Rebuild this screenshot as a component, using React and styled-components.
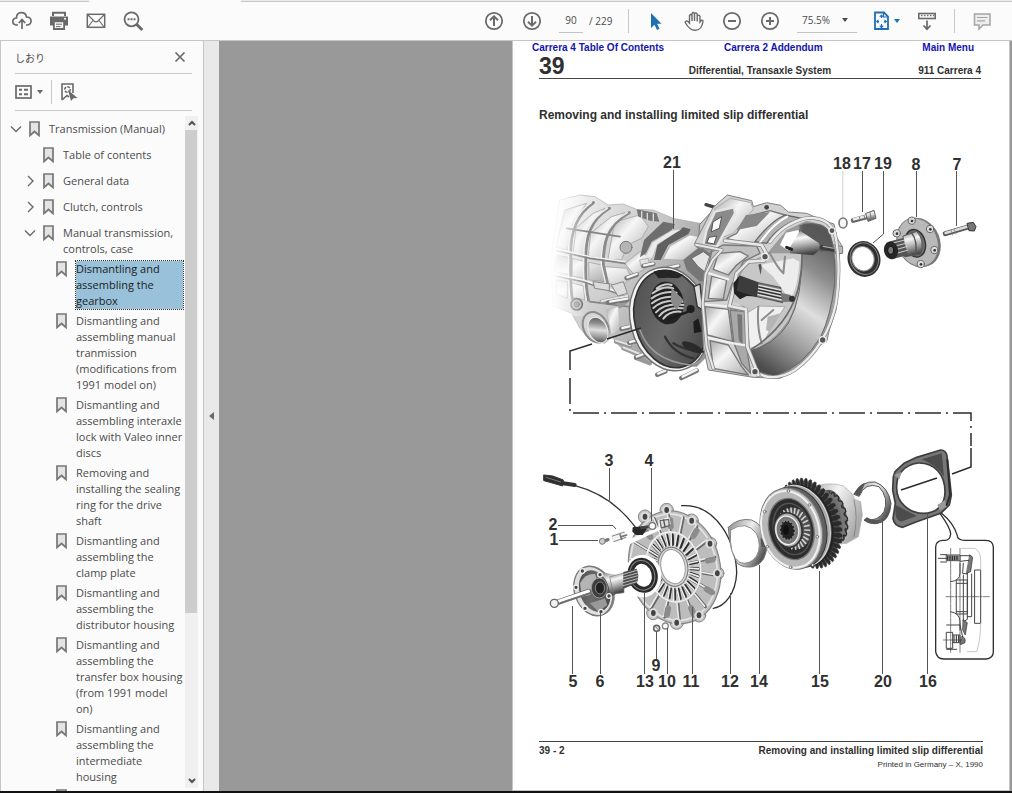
import React from "react";
import styled, { createGlobalStyle, css } from "styled-components";

const GlobalStyle = createGlobalStyle`
  * { box-sizing: border-box; }
  body {
    margin: 0;
    background: #fbfbfb;
    font-family: "Open Sans", "Noto Sans CJK JP", sans-serif;
    font-size: 11px;
    color: #4b4b4b;
  }
  button, input, select { font: inherit; color: inherit; }
`;

/* ---------- shell ---------- */

const Window = styled.div`
  display: flex;
  flex-direction: column;
  height: 100vh;
  border-bottom: 2px solid #111;
  overflow: hidden;
`;

const TabStrip = styled.div`
  display: flex;
  flex: none;
  height: 2px;
`;

const TabGap = styled.div`
  width: ${(p) => p.$width || "auto"};
  flex: ${(p) => (p.$width ? "none" : "1")};
  background: #ececec;
  border-bottom: 1px solid #c6c6c6;
`;

const ActiveTab = styled.div`
  width: 152px;
`;

const Toolbar = styled.header`
  display: flex;
  flex: none;
  align-items: center;
  justify-content: space-between;
  height: 39px;
  padding: 0 19px 1px 11px;
  border-bottom: 1px solid #c6c6c6;
  background: #fbfbfb;
`;

const ToolGroup = styled.div`
  display: flex;
  align-items: center;
  gap: ${(p) => p.$gap}px;
`;

const IconButton = styled.button`
  display: flex;
  flex: none;
  align-items: center;
  justify-content: space-between;
  width: ${(p) => p.$width || 22}px;
  height: 24px;
  padding: 0;
  border: 0;
  background: none;
  color: ${(p) => p.$color || "#6a6a6a"};
`;

const Divider = styled.span`
  width: 1px;
  height: 24px;
  background: #c8c8c8;
`;

const PageField = styled.label`
  display: flex;
  align-items: center;
  gap: 6px;
  width: 53px;
  font-size: 10px;
  white-space: pre;
`;

const PageInput = styled.input`
  width: 24px;
  height: 24px;
  padding: 0;
  border: 0;
  border-bottom: 1px solid #c4c4c4;
  background: none;
  text-align: center;
`;

const ZoomField = styled.label`
  display: flex;
  align-items: center;
  width: 60px;
  height: 24px;
  padding: 0 9px 0 5px;
  border-bottom: 1px solid #c4c4c4;
`;

const ZoomSelect = styled.select`
  flex: 1;
  min-width: 0;
  padding: 0;
  border: 0;
  appearance: none;
  background: none;
  font-size: 10px;
`;

const Body = styled.div`
  display: flex;
  flex: 1;
  min-height: 0;
`;

/* ---------- bookmarks ---------- */

const Sidebar = styled.aside`
  display: flex;
  flex: none;
  flex-direction: column;
  width: 204px;
  border-left: 1px solid #c6c6c6;
  border-right: 1px solid #c6c6c6;
  background: #fbfbfb;
`;

const PanelRow = styled.div`
  display: flex;
  flex: none;
  align-items: center;
  justify-content: ${(p) => (p.$spread ? "space-between" : "flex-start")};
  gap: 8px;
  height: ${(p) => p.$height}px;
  margin: 0 11px 0 14px;
  border-bottom: 1px solid #c8c8c8;
`;

const PanelTitle = styled.h2`
  margin: 0;
  font-size: 10px;
  font-weight: 400;
`;

const ListFrame = styled.div`
  display: flex;
  flex: 1;
  min-height: 0;
  margin: 5px 5px 0 0;
`;

const Tree = styled.ul`
  flex: 1;
  min-width: 0;
  margin: 0;
  padding: 5px 2px 0 0;
  overflow: hidden;
  list-style: none;
`;

const indents = [9, 23, 36];

const TreeRow = styled.li`
  display: flex;
  align-items: flex-start;
  min-height: 26px;
  padding: 0 0 4px ${(p) => indents[p.$level]}px;
`;

const Toggle = styled.button`
  display: flex;
  align-items: center;
  width: 19px;
  height: 16px;
  padding: 0;
  border: 0;
  background: none;
  color: #6a6a6a;
`;

const Blank = styled.span`
  flex: none;
  width: 19px;
`;

const BookmarkLink = styled.a`
  flex: 1;
  margin-left: 9px;
  line-height: 16px;
  white-space: pre-line;
  color: #4b4b4b;
  text-decoration: none;
  ${(p) =>
    p.$selected &&
    css`
      background: #99c1da;
      color: #1c1c1c;
      outline: 1px dotted #333;
      outline-offset: 0;
    `}
`;

const ScrollBar = styled.div`
  display: flex;
  flex: none;
  flex-direction: column;
  width: 13px;
  margin-bottom: 3px;
  background: #f0f0f0;
`;

const ScrollButton = styled.button`
  display: flex;
  align-items: center;
  justify-content: center;
  width: 13px;
  height: 14px;
  padding: 0;
  border: 0;
  background: none;
  color: #505050;
`;

const ScrollTrack = styled.div`
  flex: 1;
`;

const ScrollThumb = styled.div`
  width: 12px;
  height: 75%;
  background: #cdcdcd;
`;

const Rail = styled.button`
  display: flex;
  flex: none;
  align-items: center;
  justify-content: center;
  width: 15px;
  padding: 0;
  border: 0;
  background: #e9e9e9;
  color: #6a6a6a;
`;

/* ---------- document ---------- */

const Viewer = styled.main`
  display: flex;
  flex: 1;
  justify-content: flex-end;
  min-width: 0;
  padding-right: 2px;
  overflow: hidden;
  background: #999;
`;

const Sheet = styled.article`
  display: flex;
  flex: none;
  flex-direction: column;
  width: 498px;
  border: solid #c6c6c6;
  border-width: 0 1px 1px;
  background: #fff;
  color: #303030;
  font-family: "Liberation Sans", Arial, sans-serif;
  font-weight: 700;
`;

const SheetLinks = styled.nav`
  display: grid;
  grid-template-columns: auto auto 1fr;
  gap: 60px;
  padding: 0 35px 0 19px;
  font-size: 10px;
  line-height: 14px;
`;

const SheetLink = styled.a`
  color: #1414b0;
  text-decoration: none;
  text-align: right;
`;

const SheetHeader = styled.div`
  display: grid;
  grid-template-columns: 1fr auto 1fr;
  align-items: end;
  height: 24px;
  margin: 0 28px 0 26px;
  border-bottom: 1px solid #444;
  font-size: 10px;
  line-height: 15px;
`;

const Chapter = styled.span`
  font-size: 23px;
  line-height: 23px;
`;

const RightText = styled.span`
  text-align: right;
`;

const SheetTitle = styled.h1`
  margin: 28px 26px 0;
  font-size: 12px;
  line-height: 16px;
`;

const Figure = styled.figure`
  flex: none;
  height: 550px;
  margin: 27px 0 0;
`;

const SheetFooter = styled.footer`
  display: flex;
  justify-content: space-between;
  margin: 41px 26px 0;
  padding-top: 2px;
  border-top: 1px solid #444;
  font-size: 10px;
  line-height: 14px;
`;

const Imprint = styled.small`
  display: block;
  font-size: 8px;
  font-weight: 400;
  text-align: right;
`;

/* ---------- icons ---------- */

const Svg = ({ w = 22, h = 22, children, sw = 2 }) => (
  <svg
    width={w}
    height={h}
    viewBox={`0 0 ${w} ${h}`}
    fill="none"
    stroke="currentColor"
    strokeWidth={sw}
    aria-hidden="true"
  >
    {children}
  </svg>
);

const CloudIcon = () => (
  <Svg sw={1.7}>
    <path d="M7 15H6C0.5 15 0.5 8 5.5 8C5.5 1 14.500 1 15.500 7C21.500 7 21.500 15 16 15H15" />
    <path d="M11 19V10M7.800 13L11 9.600L14.200 13" />
  </Svg>
);
const PrintIcon = () => (
  <Svg>
    <path d="M5 6V2.800H17V6" />
    <rect x="2" y="6.500" width="18" height="9" fill="currentColor" stroke="none" />
    <path d="M5.900 11.400H16.100V19H5.900Z" fill="#fbfbfb" strokeWidth="1.800" />
    <path d="M8 14.200H14M8 16.600H12.500" strokeWidth="1" />
    <rect x="16" y="8" width="2" height="1.500" fill="#fbfbfb" stroke="none" />
  </Svg>
);
const MailIcon = () => (
  <Svg sw={1.5}>
    <rect x="2.300" y="4.300" width="17.400" height="13" />
    <path d="M3 5L9 11Q11 12.800 13 11L19 5M3 17L8 10.500M19 17L14 10.500" strokeWidth="1.100" />
  </Svg>
);
const SearchIcon = () => (
  <Svg>
    <circle cx="9.500" cy="9.300" r="7" strokeWidth="1.800" />
    <path d="M14.500 14.300L20.300 20" strokeWidth="3" />
    <path d="M5.500 9.300H13.500" strokeDasharray="2 1" />
  </Svg>
);
const CircleIcon = ({ d }) => (
  <Svg sw={2}>
    <circle cx="11" cy="11" r="8.200" strokeWidth="1.800" />
    <path d={d} />
  </Svg>
);
const CursorIcon = () => (
  <Svg>
    <path
      d="M6 3V18L9.500 14.800L12 20L14.500 18.800L12.100 13.800H16.500Z"
      fill="currentColor"
      stroke="none"
    />
  </Svg>
);
const HandIcon = () => (
  <Svg sw={1.4}>
    <path d="M6.500 13V5.500Q7.700 3.400 9 5.500V11V3.500Q10.200 1.600 11.500 3.500V11V3.700Q13 2 14.200 4V11.500V5.800Q16 4.200 17 6.200V12C18.500 10 19.500 9.500 20 11C19.500 16 17.500 20.300 12 20.300C7 20.300 4.500 16.500 2.200 12.500C2.500 10.300 4.700 10.700 6.500 13Z" />
  </Svg>
);
const Caret = () => (
  <svg width="6" height="4" viewBox="0 0 6 4" aria-hidden="true">
    <path d="M0 0H6L3 4Z" fill="currentColor" />
  </svg>
);
const FitIcon = () => (
  <Svg w={17} sw={1.8}>
    <path d="M2 2.500H11L15 6.500V19H2Z" />
    <path d="M10.500 3V7H15" strokeWidth="1.200" />
    <path d="M8.500 5V8M8.500 14V17.500M3.500 11.500H6M11 11.500H14" strokeWidth="1.200" />
    <path d="M6.800 7L8.500 5L10.200 7M6.800 15.700L8.500 17.700L10.200 15.700M5.500 9.800L3.700 11.500L5.500 13.200M11.500 9.800L13.300 11.500L11.500 13.200" strokeWidth="1.100" />
  </Svg>
);
const RulerIcon = () => (
  <Svg>
    <rect x="2.800" y="3.500" width="16.400" height="5" strokeWidth="1.600" />
    <path d="M5 5.500H18" strokeWidth="1.500" strokeDasharray="1.500 1.500" />
    <path d="M11 10.500V19M7.500 15.500L11 19.200L14.500 15.500" strokeWidth="1.700" />
  </Svg>
);
const CommentIcon = () => (
  <Svg>
    <path d="M3.500 4H19V15H12L8 19V15H3.500Z" fill="#eee" strokeWidth="1.500" />
    <path d="M6 7.500H16.500M6 10.800H14" strokeWidth="1.200" />
  </Svg>
);
const CloseIcon = () => (
  <Svg w={12} h={12}>
    <path d="M1.500 1.500L10.500 10.500M10.500 1.500L1.500 10.500" strokeWidth="1.700" />
  </Svg>
);
const PanelOptionsIcon = () => (
  <Svg w={17} h={14}>
    <rect x="1" y="1" width="15" height="12" strokeWidth="1.700" />
    <path d="M4 4.800H7M4 9.200H7M9 4.800H13M9 9.200H13" strokeWidth="2" />
  </Svg>
);
const FindBookmarkIcon = () => (
  <Svg w={18} h={20} sw={1.6}>
    <path d="M2 18V2H13V11M2 18L7 13.500L9 15" />
    <circle cx="7.500" cy="7.500" r="2.800" strokeDasharray="3 1.200" />
    <path d="M8 8L17.500 16L13.500 16.300L11 19Z" fill="currentColor" stroke="none" />
  </Svg>
);
const BookmarkSvg = styled.svg`
  flex: none;
`;
const BookmarkIcon = () => (
  <BookmarkSvg width="11" height="16" viewBox="0 0 11 16" aria-hidden="true">
    <path d="M1 1H10V14.500L5.500 10.500L1 14.500Z" fill="#e4e4e4" stroke="#777" strokeWidth="1.700" />
  </BookmarkSvg>
);
const Chevron = ({ open }) => (
  <Svg w={12} h={12} sw={1.4}>
    <path d={open ? "M1 3.500L6 8.500L11 3.500" : "M4 1L9 6L4 11"} />
  </Svg>
);

/* ---------- exploded view ---------- */

const polar = (cx, cy, rx, ry, a, tilt = 0) => {
  const t = (tilt * Math.PI) / 180;
  const x = rx * Math.cos(a);
  const y = ry * Math.sin(a);
  return [
    (cx + x * Math.cos(t) - y * Math.sin(t)).toFixed(1),
    (cy + x * Math.sin(t) + y * Math.cos(t)).toFixed(1),
  ];
};

const teeth = (cx, cy, rx, ry, n, depth, tilt) => {
  const pts = [];
  for (let i = 0; i < n; i++) {
    [[0, 0], [0.3, depth], [0.65, depth], [0.8, 0]].forEach(([f, d]) => {
      pts.push(polar(cx, cy, rx + d, ry + d, ((i + f) / n) * Math.PI * 2, tilt).join(","));
    });
  }
  return `M${pts.join("L")}Z`;
};

const Spokes = ({ cx, cy, inner, outer, n, tilt = 0, ...rest }) => {
  let d = "";
  for (let i = 0; i < n; i++) {
    const a = (i / n) * Math.PI * 2;
    d += `M${polar(cx, cy, inner[0], inner[1], a, tilt)}L${polar(cx, cy, outer[0], outer[1], a, tilt)}`;
  }
  return <path d={d} fill="none" {...rest} />;
};

const Ring = ({ cx, cy, rx, ry, tilt = 0, ...rest }) => (
  <ellipse cx={cx} cy={cy} rx={rx} ry={ry} transform={`rotate(${tilt} ${cx} ${cy})`} {...rest} />
);

const callouts = [
  ["21", 672, 168], ["18", 842, 169], ["17", 862, 169], ["19", 883, 169],
  ["8", 916, 170], ["7", 957, 170], ["3", 609, 466], ["4", 649, 466],
  ["2", 553, 530], ["1", 554, 545], ["9", 656, 671], ["5", 573, 687],
  ["6", 600, 687], ["13", 645, 687], ["10", 667, 687], ["11", 691, 687],
  ["12", 730, 687], ["14", 759, 687], ["15", 820, 687], ["20", 883, 687],
  ["16", 928, 687],
];

const leaders =
  "M673.500 170V229M862.500 171V212M883.500 171V234L873 243M916.500 171V217M956.500 171V226" +
  "M609.500 468V502M651.500 468V521M558 525.500H613L616 529M559 540.500H598" +
  "M572.500 606V674M600.500 612V674M644.500 593V674M656.500 632V659M667.500 628V674" +
  "M692.500 607V674M730.500 593V674M759.500 565V674M819.500 571V674M882.500 518V674M927.500 514V674";

function Defs() {
  return (
    <defs>
      <linearGradient id="body" x1="0" y1="0" x2="1" y2="0.6">
        <stop offset="0" stopColor="#fff" />
        <stop offset="0.25" stopColor="#e3e3e3" />
        <stop offset="0.6" stopColor="#c4c4c4" />
        <stop offset="1" stopColor="#8e8e8e" />
      </linearGradient>
      <linearGradient id="cell" x1="0" y1="0" x2="1" y2="1">
        <stop offset="0" stopColor="#a8a8a8" />
        <stop offset="0.4" stopColor="#f6f6f6" />
        <stop offset="1" stopColor="#adadad" />
      </linearGradient>
      <linearGradient id="wall" x1="0.7" y1="0" x2="0.3" y2="1">
        <stop offset="0" stopColor="#5c5c5c" />
        <stop offset="0.25" stopColor="#8d8d8d" />
        <stop offset="0.5" stopColor="#dedede" />
        <stop offset="0.75" stopColor="#9b9b9b" />
        <stop offset="1" stopColor="#4c4c4c" />
      </linearGradient>
      <linearGradient id="metal" x1="0" y1="0" x2="0.2" y2="1">
        <stop offset="0" stopColor="#777" />
        <stop offset="0.35" stopColor="#f7f7f7" />
        <stop offset="0.65" stopColor="#aaa" />
        <stop offset="1" stopColor="#444" />
      </linearGradient>
      <linearGradient id="dark" x1="0" y1="0" x2="1" y2="1">
        <stop offset="0" stopColor="#4a4a4a" />
        <stop offset="0.5" stopColor="#6c6c6c" />
        <stop offset="1" stopColor="#3c3c3c" />
      </linearGradient>
      <linearGradient id="band" x1="0" y1="0" x2="1" y2="0.6">
        <stop offset="0" stopColor="#888" />
        <stop offset="0.5" stopColor="#eee" />
        <stop offset="0.8" stopColor="#999" />
        <stop offset="1" stopColor="#555" />
      </linearGradient>
      <linearGradient id="sleeve" x1="0" y1="0" x2="1" y2="0.5">
        <stop offset="0" stopColor="#999" />
        <stop offset="0.5" stopColor="#f4f4f4" />
        <stop offset="1" stopColor="#aaa" />
      </linearGradient>
      <linearGradient id="fade" x1="0" y1="0" x2="1" y2="0">
        <stop offset="0" stopColor="#fff" />
        <stop offset="0.25" stopColor="#fff" stopOpacity="0.9" />
        <stop offset="1" stopColor="#fff" stopOpacity="0" />
      </linearGradient>
    </defs>
  );
}

function Gearbox() {
  return (
    <g transform="translate(540 150) scale(.33333)" strokeLinejoin="round" strokeLinecap="round">
      <path
        d="M60 150L120 135L165 140L205 165L250 162L290 178L340 180L400 205L480 220L520 250V600L470 650L370 640L300 625L240 590L215 560L195 580L150 570L120 535L95 490L40 468L30 340Z"
        fill="url(#body)"
        stroke="#aaa"
        strokeWidth="2"
      />
      <g fill="url(#cell)" stroke="#999" strokeWidth="2">
        <path d="M75 180L140 160L100 220L82 300L50 292Z" />
        <path d="M160 190L195 175L145 235L135 318L100 308L108 235Z" />
        <path d="M215 200L255 188L205 240L192 328L145 318L152 250Z" />
        <path d="M225 215L300 195L325 230L305 265L262 285L245 330L205 328Z" />
        <path d="M50 315L85 322L90 375L45 365ZM98 325L135 335L138 388L98 378ZM147 337L185 345L195 395L148 390Z" />
        <path d="M50 390L82 395V445L50 432ZM92 398L130 408L135 450L95 442ZM195 350L260 355L275 385L240 410L200 398Z" />
        <path d="M255 340L300 305L335 325L325 350L285 375ZM300 330L325 325L328 345L305 350Z" />
      </g>
      <g fill="none" stroke="#8b8b8b" strokeWidth="9">
        <path d="M160 158C105 195 88 255 92 330Q90 400 96 445" />
        <path d="M208 175C150 210 135 260 137 340Q135 400 145 450" />
        <path d="M268 188C200 225 188 280 190 345L205 410" />
      </g>
      <g fill="none" stroke="#efefef" strokeWidth="4">
        <path d="M154 158C99 195 82 255 86 330Q84 400 90 445" />
        <path d="M202 175C144 210 129 260 131 340Q129 400 139 450" />
        <path d="M262 188C194 225 182 280 184 345L199 410" />
      </g>
      <path d="M50 302L150 325L255 340M45 378L130 395L260 440M150 455L265 470M80 235L240 260" stroke="#858585" strokeWidth="5" fill="none" />
      <path d="M50 297L150 320L255 335M45 373L130 390L260 435" stroke="#f4f4f4" strokeWidth="4" fill="none" />
      <path d="M290 178L350 190L358 215L330 212L295 200Z" fill="#777" />
      <path d="M305 185V205M322 190V208M340 192V212" stroke="#ddd" strokeWidth="4" />
      <path d="M370 215L405 222L395 240L335 275L318 310L300 322L312 270Z" fill="#6e6e6e" />
      <path d="M430 232L452 238L445 252L385 285L362 330L342 330L352 285Z" fill="#606060" />
      <path d="M395 242L425 238L352 282L335 325L318 318L338 278Z" fill="#eaeaea" />
      <path d="M450 255L475 260L480 290L430 330L370 328L390 288Z" fill="url(#cell)" stroke="#888" />
      <path d="M430 330L480 290L525 320L510 390L480 395L440 360Z" fill="#777" />
      <path d="M455 325L490 305L510 320L500 370L475 350Z" fill="#e5e5e5" stroke="#555" strokeWidth="2" />
      <path d="M480 222L510 190L540 200L505 295L475 290Z" fill="#c6c6c6" stroke="#777" strokeWidth="3" />
      <circle cx="258" cy="292" r="18" fill="#b5b5b5" stroke="#777" strokeWidth="3" />
      <path d="M160 395L208 402V422L165 415ZM215 405L250 395L262 430L235 438Z" fill="#dcdcdc" stroke="#888" strokeWidth="3" />

      <circle cx="110" cy="463" r="17" fill="#bbb" stroke="#666" strokeWidth="5" />
      <circle cx="110" cy="463" r="8" fill="#999" stroke="#666" strokeWidth="2" />
      <Ring cx={167} cy={532} rx={36} ry={48} tilt={-28} fill="#d5d5d5" stroke="#8a8a8a" strokeWidth="6" />
      <Ring cx={174} cy={540} rx={28} ry={40} tilt={-25} fill="url(#wall)" stroke="#eee" strokeWidth="3" />
      <path d="M200 480L235 470L240 540L215 555Z" fill="url(#cell)" stroke="#aaa" />
      <path d="M185 455L262 440M240 468L262 450M228 575L270 588M250 595L300 615M290 625L330 640" stroke="#999" strokeWidth="13" />
      <path d="M185 453L262 438M228 572L270 585M250 592L300 612" stroke="#e4e4e4" strokeWidth="6" />
      <path d="M260 384L290 374M205 458L262 449M245 536L268 531M268 578L300 570M288 622L315 612M352 674L376 664M424 684L470 662M385 355L415 348M310 348L340 342" stroke="#777" strokeWidth="14" />
      <path d="M262 382L290 372M210 455L262 446M247 534L268 529M270 576L300 568M290 620L315 610M354 671L376 662M428 680L470 659M387 353L415 346M312 346L340 340" stroke="#f4f4f4" strokeWidth="7" />

      <Ring cx={389} cy={507} rx={118} ry={157} tilt={-14} fill="#f4f4f4" stroke="#6f6f6f" strokeWidth="4" />
      <Ring cx={392} cy={507} rx={108} ry={148} tilt={-14} fill="url(#dark)" stroke="#333" strokeWidth="5" />
      <path d="M340 365Q380 350 430 375L415 385Q380 382 355 385Z" fill="#252525" />
      <path d="M300 540Q330 630 450 645Q490 640 500 600" stroke="#999" strokeWidth="5" fill="none" />
      <path d="M375 560Q400 610 460 625M400 580Q430 600 490 605" stroke="#333" strokeWidth="7" fill="none" />
      <ellipse cx="457" cy="592" rx="34" ry="12" transform="rotate(25 457 592)" fill="#2a2a2a" />
      <Ring cx={381} cy={459} rx={50} ry={64} tilt={-8} fill="#222" />
      <path
        d="M338 430Q370 405 400 415M335 445Q370 420 410 428M336 460Q370 432 420 443M340 474Q372 445 428 455M348 487Q375 458 430 465M358 498Q380 470 428 475M370 506Q388 482 422 485M350 415Q375 398 395 405"
        stroke="#c9c9c9"
        strokeWidth="6"
        fill="none"
      />
      <path d="M395 413L430 450L410 480L392 455Z" fill="#8a8a8a" />
      <circle cx="452" cy="477" r="12" fill="#1d1d1d" />
      <path d="M445 485L385 508" stroke="#1d1d1d" strokeWidth="7" />
      <path d="M460 515L475 505L485 545L462 550Z" fill="#1c1c1c" />
      <path d="M462 410L480 402L488 480L472 470Z" fill="#ddd" stroke="#333" strokeWidth="4" />
    </g>
  );
}

function BellHousing() {
  return (
    <g transform="translate(540 150) scale(.33333)" strokeLinejoin="round" strokeLinecap="round">
      <path d="M498 164L525 172" stroke="#444" strokeWidth="10" />
      <path
        d="M520 172L562 135L635 152L640 170L680 158L722 166L745 186L800 190L850 212L882 222L890 262L906 288L898 310L897 390L888 480L868 540L860 575L840 585Q790 655 720 685L640 682L505 660L490 590L486 460L492 370L515 300L470 292L465 280Z"
        fill="#d2d2d2"
        stroke="#808080"
        strokeWidth="3"
      />
      <path d="M525 175L570 145L632 158L640 178L580 250L548 262L530 235Z" fill="url(#cell)" stroke="#999" strokeWidth="2" />
      <path d="M525 185L582 172L585 190L545 262L530 290L490 285L500 240Z" fill="#8a8a8a" stroke="#e6e6e6" strokeWidth="7" />
      <path d="M520 215L545 200L538 235L515 245ZM508 262L530 258L522 282L502 278Z" fill="#fafafa" stroke="#555" strokeWidth="3" />
      <path d="M590 250L620 200L690 182L735 195L660 270L625 285L560 265Z" fill="url(#cell)" stroke="#777" strokeWidth="4" />
      <path d="M618 195L690 186L650 228L590 240Z" fill="#878787" />
      <path d="M735 195Q690 215 645 275L680 280Q715 225 785 205Z" fill="#b2b2b2" stroke="#666" strokeWidth="4" />
      <path d="M742 200Q700 220 660 278" stroke="#fff" strokeWidth="6" fill="none" />
      <circle cx="680" cy="172" r="7" fill="#444" />
      <path d="M515 305L548 285L650 288L660 310L610 335L575 405L560 450L492 455L500 370Z" fill="#bfbfbf" stroke="#777" strokeWidth="4" />
      <path d="M535 310L600 305L625 318L590 345L565 375L520 358Z" fill="url(#cell)" stroke="#777" strokeWidth="4" />
      <path d="M515 378L560 390L550 448L505 445Z" fill="url(#cell)" stroke="#777" strokeWidth="4" />
      <path d="M495 470L565 478L578 575L502 555Z" fill="url(#cell)" stroke="#777" strokeWidth="4" />
      <path d="M510 572L565 585L605 650L625 675L520 655Z" fill="url(#cell)" stroke="#777" strokeWidth="4" />
      <path d="M570 480L615 485L618 580L632 670L605 640L582 580Z" fill="#a9a9a9" stroke="#777" strokeWidth="4" />
      <path d="M592 492L606 494L608 585L596 570Z" fill="#777" />
      <path d="M495 463L570 470L617 478M502 563L580 580L618 586M500 368L565 388" stroke="#f0f0f0" strokeWidth="7" fill="none" />

      <path d="M620 340L680 312L740 240L800 212L850 225Q895 280 890 400Q880 500 850 560Q800 650 710 680L655 675Q625 640 618 480L575 440Q585 380 620 340Z" fill="#9b9b9b" />
      <path d="M790 222Q850 215 868 245Q888 300 884 400Q872 500 842 560Q790 650 705 678L655 666Q630 640 625 600Q700 590 745 520Q790 440 785 300Z" fill="url(#wall)" stroke="#666" strokeWidth="3" />
      <path d="M620 345L690 310L785 310Q785 440 745 510Q700 580 628 602L615 470L580 455Q585 390 620 345Z" fill="#c7c7c7" />
      <path d="M660 345L760 325L778 335Q775 410 750 450L700 380Z" fill="#ededed" />
      <path d="M620 490L655 468L735 470L690 540L670 580L630 595Z" fill="#f0f0f0" stroke="#aaa" strokeWidth="3" />
      <path d="M655 470Q650 530 665 580M665 510L700 480M690 310Q710 350 730 370L735 320" stroke="#8c8c8c" strokeWidth="6" fill="none" />
      <path d="M683 500L720 490L690 545L678 540Z" fill="#b5b5b5" />
      <path d="M778 240Q795 310 778 400Q755 520 632 600" stroke="#6a6a6a" strokeWidth="5" fill="none" />
      <path d="M720 285L738 248L776 240L778 270L742 300Z" fill="#fff" />
      <path d="M655 345Q670 330 662 375Z" fill="#555" />
      <path d="M778 225Q845 215 868 250L880 300L845 305L780 265Z" fill="#565656" opacity=".75" />
      <path d="M780 242L835 278L845 295L820 316L750 310L748 295Z" fill="url(#metal)" />
      <path d="M740 292L755 298" stroke="#222" strokeWidth="9" />
      <path d="M845 292L900 302" stroke="#3d3d3d" strokeWidth="14" />
      <path d="M850 289L900 298" stroke="#aaa" strokeWidth="4" />
      <path d="M880 284L908 290V310L888 312Z" fill="#bbb" stroke="#777" strokeWidth="3" />

      <path d="M690 276Q730 220 800 204Q865 200 885 250Q905 350 888 460Q860 590 765 660Q700 700 645 665" stroke="#888" strokeWidth="11" fill="none" />
      <path d="M690 276Q730 220 800 204Q865 200 885 250Q905 350 888 460Q860 590 765 660Q700 700 645 665" stroke="#ececec" strokeWidth="7" fill="none" />
      <path d="M555 272L665 285L680 312L672 332L625 335L590 370L575 440L568 470L618 480L622 590L655 675" stroke="#888" strokeWidth="13" fill="none" />
      <path d="M555 272L665 285L680 312L672 332L625 335L590 370L575 440L568 468L618 478L622 590L655 675" stroke="#e8e8e8" strokeWidth="8" fill="none" />
      <path d="M468 284L545 300L518 330L497 372L488 460L500 590L520 655" stroke="#888" strokeWidth="11" fill="none" />
      <path d="M468 284L545 300L518 330L497 372L488 460L500 590L520 655" stroke="#e8e8e8" strokeWidth="6" fill="none" />

      <path d="M582 430L580 400L598 378L650 400L660 440L620 438L600 448Z" fill="#222" />
      <path d="M598 376L655 397L650 442L590 422Z" fill="#3c3c3c" />
      <path d="M655 398L722 412L728 458L650 440Z" fill="#777" stroke="#333" strokeWidth="2" />
      <path d="M657 406L722 420M656 415L724 430M655 424L725 440M654 434L726 450" stroke="#e0e0e0" strokeWidth="4" />
      <path d="M657 411L722 425M656 420L724 435M654 429L725 445" stroke="#222" strokeWidth="3" />
      <path d="M722 428L752 435L760 455L726 456Z" fill="#777" />
      <circle cx="756" cy="446" r="9" fill="#333" />
      <g fill="#555" stroke="#eee" strokeWidth="4">
        <circle cx="675" cy="320" r="10" />
        <circle cx="645" cy="665" r="10" />
        <circle cx="876" cy="242" r="9" />
        <circle cx="848" cy="570" r="10" />
      </g>
    </g>
  );
}

function OutputParts() {
  return (
    <g transform="translate(760 150) scale(.33333)" strokeLinejoin="round" strokeLinecap="round">
      <path d="M248.500 64V205" stroke="#bbb" strokeWidth="2" />
      <Ring cx={249} cy={219} rx={12} ry={15} fill="#f6f6f6" stroke="#777" strokeWidth="5" />
      <path d="M280 211L322 200" stroke="#666" strokeWidth="15" />
      <path d="M282 208L320 198" stroke="#ececec" strokeWidth="8" />
      <path d="M318 190L342 181L348 205L325 214Z" fill="url(#metal)" stroke="#666" strokeWidth="3" />
      <path d="M298 201L302 211M312 197L316 208M330 188L334 208" stroke="#777" strokeWidth="3" />

      <Ring cx={312} cy={327} rx={39} ry={44} tilt={-18} fill="none" stroke="#303030" strokeWidth="20" />
      <Ring cx={313} cy={326} rx={42} ry={48} tilt={-18} fill="none" stroke="#888" strokeWidth="3" />
      <Ring cx={309} cy={326} rx={33} ry={37} tilt={-18} fill="#fff" stroke="#8c8c8c" strokeWidth="3" />

      <Ring cx={480} cy={277} rx={60} ry={75} tilt={-22} fill="#777" />
      <Ring cx={473} cy={277} rx={60} ry={75} tilt={-22} fill="#b9b9b9" stroke="#777" strokeWidth="3" />
      {[[455, 212], [510, 237], [523, 300], [482, 342], [410, 250]].map(([x, y]) => (
        <g key={x}>
          <circle cx={x} cy={y} r="11" fill="#dcdcdc" stroke="#666" strokeWidth="3" />
          <circle cx={x + 1} cy={y + 1} r="4" fill="#333" />
        </g>
      ))}
      <Ring cx={466} cy={280} rx={30} ry={42} tilt={-14} fill="#6c6c6c" stroke="#333" strokeWidth="4" />
      <path d="M430 258L470 244Q495 270 482 312L435 320Z" fill="url(#metal)" stroke="#555" strokeWidth="3" />
      <path d="M455 249Q475 275 465 315" stroke="#555" strokeWidth="4" fill="none" />
      <path d="M390 274L430 264L444 315L402 326Z" fill="#555" />
      <path d="M402 278L435 270M405 288L438 280M407 299L440 290M409 310L442 301" stroke="#ccc" strokeWidth="3" />
      <Ring cx={393} cy={301} rx={21} ry={27} tilt={-12} fill="#262626" />
      <Ring cx={392} cy={301} rx={9} ry={12} fill="#777" stroke="#111" strokeWidth="3" />

      <path d="M556 251L628 230" stroke="#555" strokeWidth="15" />
      <path d="M557 249L628 228" stroke="#ddd" strokeWidth="8" />
      <path d="M573 241L578 255M583 238L588 252" stroke="#777" strokeWidth="2" />
      <path d="M622 220L640 217L648 230L643 243L628 242Z" fill="#777" stroke="#333" strokeWidth="3" />
    </g>
  );
}

const coverLugs = [
  [345, 230], [410, 210], [485, 242], [540, 311], [562, 400], [507, 526], [440, 548], [370, 519],
];

function CoverParts() {
  return (
    <g transform="translate(530 440) scale(.33333)" strokeLinejoin="round" strokeLinecap="round">
      <path d="M42 105L68 108L100 120L98 138L70 130L42 122Z" fill="#2f2f2f" stroke="#333" strokeWidth="3" />
      <path d="M48 112L92 126M100 131L135 136" stroke="#777" strokeWidth="3" />
      <path d="M100 130L134 135" stroke="#333" strokeWidth="12" />
      <path d="M135 137Q245 165 318 264" stroke="#333" strokeWidth="4" fill="none" />

      {coverLugs.map(([x, y]) => (
        <circle key={x} cx={x} cy={y} r="20" fill="#c5c5c5" stroke="#888" strokeWidth="3" />
      ))}
      <Ring cx={434} cy={382} rx={136} ry={171} tilt={-14} fill="#c2c2c2" stroke="#888" strokeWidth="4" />
      <Ring cx={432} cy={382} rx={128} ry={161} tilt={-14} fill="#bdbdbd" stroke="#e4e4e4" strokeWidth="5" />
      <Spokes cx={432} cy={382} inner={[84, 108]} outer={[126, 159]} n={18} tilt={-14} stroke="#686868" strokeWidth="9" />
      <Spokes cx={429} cy={380} inner={[84, 108]} outer={[126, 159]} n={18} tilt={-14} stroke="#ececec" strokeWidth="5" />
      <Spokes cx={436} cy={386} inner={[100, 128]} outer={[116, 148]} n={9} tilt={-14} stroke="#8c8c8c" strokeWidth="18" />
      <Ring cx={430} cy={381} rx={81} ry={106} tilt={-12} fill="#c9c9c9" stroke="#777" strokeWidth="4" />
      <Spokes cx={430} cy={381} inner={[52, 69]} outer={[74, 97]} n={28} tilt={-12} stroke="#303030" strokeWidth="10" />
      <Spokes cx={427} cy={380} inner={[46, 64]} outer={[78, 103]} n={28} tilt={-12} stroke="#ededed" strokeWidth="5" />
      <Ring cx={430} cy={381} rx={81} ry={106} tilt={-12} fill="none" stroke="#f0f0f0" strokeWidth="5" />
      <Ring cx={429} cy={380} rx={44} ry={59} tilt={-12} fill="#d5d5d5" stroke="#777" strokeWidth="3" />
      <Ring cx={429} cy={380} rx={36} ry={52} tilt={-12} fill="#fff" stroke="#999" strokeWidth="3" />
      {coverLugs.map(([x, y]) => (
        <g key={x}>
          <circle cx={x} cy={y} r="14" fill="#ddd" />
          <ellipse cx={x} cy={y} rx="7" ry="9" fill="#444" />
        </g>
      ))}

      <path d="M292 300L385 262L385 240L418 232L422 252L395 268L300 312Z" fill="#fff" />
      <path d="M308 262L345 258L350 268L338 285L318 285L307 275Z" fill="#282828" />
      <path d="M335 263L372 258" stroke="#444" strokeWidth="9" />
      <circle cx="367" cy="258" r="10" fill="#fff" stroke="#777" strokeWidth="4" />
      <path d="M390 242L416 238L418 257L394 264Z" fill="#ddd" stroke="#666" strokeWidth="4" />
      <path d="M401 240L405 260" stroke="#555" strokeWidth="4" />

      <path d="M248 297L286 284" stroke="#888" strokeWidth="20" strokeLinecap="butt" />
      <path d="M248 297L286 284" stroke="#f3f3f3" strokeWidth="14" strokeLinecap="butt" />
      <path d="M270 284L275 298M274 290L290 285" stroke="#777" strokeWidth="5" />
      <path d="M220 304L234 299" stroke="#777" strokeWidth="10" />
      <circle cx="217" cy="304" r="9" fill="#ccc" stroke="#777" strokeWidth="3" />

      <Ring cx={338} cy={408} rx={56} ry={64} fill="#fff" />
      <Ring cx={338} cy={406} rx={36} ry={44} tilt={-15} fill="#fff" stroke="#2b2b2b" strokeWidth="18" />
      <Ring cx={337} cy={406} rx={37} ry={45} tilt={-15} fill="none" stroke="#888" strokeWidth="3" />

      <Ring cx={196} cy={453} rx={56} ry={76} tilt={-20} fill="#888" />
      <Ring cx={190} cy={453} rx={56} ry={76} tilt={-20} fill="#ddd" stroke="#777" strokeWidth="4" />
      <Ring cx={194} cy={453} rx={45} ry={64} tilt={-20} fill="url(#dark)" />
      <path d="M150 430Q165 400 195 402L205 430L180 465L155 470Z" fill="#b4b4b4" />
      <path d="M180 490L225 475L232 495L205 515Z" fill="#999" />
      <path d="M215 397L265 406L258 462L240 470Q240 430 215 397Z" fill="url(#metal)" />
      <path d="M240 410L282 399V458L252 462Z" fill="url(#metal)" stroke="#777" strokeWidth="2" />
      <path d="M280 396L320 386Q330 410 320 430L280 446Z" fill="#4b4b4b" />
      <path d="M280 403L320 391M280 411L323 399M280 419L324 407M280 428L323 416M280 437L321 425" stroke="#bbb" strokeWidth="3" />
      <Ring cx={208} cy={444} rx={24} ry={30} fill="#3e3e3e" stroke="#999" strokeWidth="3" />
      <Ring cx={210} cy={444} rx={14} ry={18} fill="#222" stroke="#888" strokeWidth="3" />
      {[[157, 393], [210, 404], [237, 468], [213, 515], [165, 505], [138, 442]].map(([x, y]) => (
        <circle key={x} cx={x} cy={y} r="7" fill="#444" stroke="#eee" strokeWidth="4" />
      ))}
      <path d="M80 488L176 455" stroke="#666" strokeWidth="17" />
      <path d="M80 486L175 454" stroke="#fff" strokeWidth="10" />
      <path d="M90 488L176 459" stroke="#777" strokeWidth="3" />
      <circle cx="73" cy="490" r="12" fill="#f2f2f2" stroke="#666" strokeWidth="4" />

      <path d="M455 197C560 190 620 310 620 400C617 460 585 500 550 505" stroke="#303030" strokeWidth="4" fill="none" />
      <circle cx="380" cy="565" r="9" fill="#eee" stroke="#666" strokeWidth="5" />
      <path d="M376 559L386 571" stroke="#777" strokeWidth="3" />
      <circle cx="406" cy="558" r="9" fill="#fff" stroke="#888" strokeWidth="4" />
    </g>
  );
}

function DifferentialParts() {
  return (
    <g transform="translate(730 440) scale(.33333)" strokeLinejoin="round" strokeLinecap="round">
      <path d="M-5 262Q25 232 65 240Q105 255 111 310Q110 370 70 380Q40 385 22 370Q-2 330 -5 262Z" fill="url(#band)" stroke="#777" strokeWidth="3" />
      <path d="M2 270Q-5 345 30 368Q60 376 80 348Q96 318 80 282Q50 238 2 270Z" fill="#fff" stroke="#888" strokeWidth="3" />
      <path d="M92 295L111 302V322L94 320Z" fill="#555" />

      <path d="M225 150Q290 120 340 138Q370 160 374 178L392 185L397 225L385 290L350 310L290 315Z" fill="url(#sleeve)" stroke="#aaa" strokeWidth="2" />
      <path d="M372 180Q385 230 372 290" stroke="#888" strokeWidth="3" fill="none" />
      <Ring cx={308} cy={230} rx={42} ry={82} tilt={-12} fill="url(#dark)" />
      <path d={teeth(312, 232, 32, 70, 18, 7, -12)} fill="#777" stroke="#2c2c2c" strokeWidth="4" />
      <Ring cx={292} cy={234} rx={42} ry={86} tilt={-12} fill="#6e6e6e" />
      <path d={teeth(238, 250, 84, 130, 44, 9, -18)} fill="#2b2b2b" stroke="#2b2b2b" strokeWidth="2" />
      <Spokes cx={238} cy={250} inner={[70, 118]} outer={[88, 134]} n={44} tilt={-18} stroke="#666" strokeWidth="2" />
      <Ring cx={216} cy={257} rx={88} ry={124} tilt={-16} fill="#777" stroke="#222" strokeWidth="5" />
      <Ring cx={208} cy={258} rx={90} ry={124} tilt={-16} fill="#aaa" stroke="#ddd" strokeWidth="3" />
      <Ring cx={198} cy={262} rx={90} ry={124} tilt={-16} fill="#606060" stroke="#333" strokeWidth="3" />
      <Ring cx={184} cy={266} rx={91} ry={124} tilt={-16} fill="#bfbfbf" stroke="#777" strokeWidth="3" />
      <Ring cx={181} cy={268} rx={85} ry={117} tilt={-16} fill="#b8b8b8" stroke="#f0f0f0" strokeWidth="6" />
      <Ring cx={184} cy={267} rx={67} ry={93} tilt={-14} fill="#2d2d2d" stroke="#777" strokeWidth="4" />
      <Ring cx={186} cy={267} rx={55} ry={78} tilt={-14} fill="none" stroke="#555" strokeWidth="4" />
      <Ring cx={197} cy={264} rx={44} ry={62} tilt={-12} fill="#505050" />
      <Spokes cx={190} cy={266} inner={[34, 46]} outer={[48, 62]} n={26} tilt={-12} stroke="#cfcfcf" strokeWidth="5" />
      <Ring cx={174} cy={270} rx={42} ry={52} tilt={-10} fill="#aaa" stroke="#333" strokeWidth="5" />
      <Ring cx={172} cy={271} rx={34} ry={43} tilt={-10} fill="#777" stroke="#efefef" strokeWidth="4" />
      <path d={teeth(172, 271, 20, 27, 14, 4, -10)} fill="#222" stroke="#aaa" strokeWidth="2" />
      <ellipse cx="168" cy="270" rx="9" ry="15" fill="#111" />
      {[[175, 153], [238, 195], [262, 290], [248, 375], [182, 382], [112, 320], [104, 215]].map(([x, y]) => (
        <circle key={x} cx={x} cy={y} r="4" fill="#eee" stroke="#777" strokeWidth="3" />
      ))}

      <path d="M372 162Q395 122 435 126Q475 140 483 190Q480 245 440 251Q415 252 402 240Q445 245 462 215Q478 175 447 140Q405 125 388 168Z" fill="url(#band)" stroke="#555" strokeWidth="3" />
      <path d="M402 240Q420 255 445 248L455 238Q430 245 410 232ZM372 162Q385 135 405 128L400 142L388 168Z" fill="#555" />

      <path
        fillRule="evenodd"
        d="M490 110L495 95L522 70L560 52L632 30Q648 30 651 48L656 90L664 165L658 195L632 220L560 245L518 262Q492 258 489 235L496 190L488 150ZM500 145C500 190 540 220 580 220C625 220 645 190 645 155C645 105 615 68 565 69C520 75 498 105 500 145Z"
        fill="#777"
        stroke="#3d3d3d"
        strokeWidth="5"
      />
      <path d="M575 58L635 40L642 110Q620 75 575 58ZM497 195L560 228L512 245Q492 240 497 195Z" fill="#4c4c4c" />
      <path d="M492 105L515 95L508 118ZM622 195L645 180L650 200L630 212Z" fill="#999" />
      <path d="M652 60L660 165L650 195" stroke="#2c2c2c" strokeWidth="6" fill="none" />

      <path d="M630 220Q662 265 662 282Q660 301 645 301H637Q617 303 617 322V635Q620 657 642 657H768Q790 655 790 635V322Q789 301 768 301H705Q682 300 682 287Q672 250 634 219" fill="#fff" stroke="#303030" strokeWidth="4" />
      <g stroke="#444" fill="none" strokeWidth="3">
        <path d="M625 355H650M650 345H690V362H650ZM690 347L722 347L725 360L690 364M632 344H650M632 366H650" />
        <path d="M662 325V640M690 325V640" strokeWidth="2" strokeDasharray="18 3" />
        <path d="M662 425Q690 422 690 400L690 370M700 370L698 400L712 402L725 350M712 402V538L700 545V405M725 402V530H712M735 390H752V550H735ZM662 515Q690 520 690 545V570M680 420H712V522H680ZM680 430H712M680 515H712" />
        <path d="M695 325H735Q752 335 752 360V390M752 550Q752 600 740 635L712 635" stroke="#aaa" strokeWidth="2" />
        <path d="M648 470H778" strokeWidth="2" strokeDasharray="24 4 5 4" />
        <path d="M650 555H690M650 577H668V625H650ZM668 585H690V608H668M690 555L700 600H690M650 628H680" />
        <path d="M640 600H705" strokeWidth="2" />
      </g>
      <path d="M652 346H688V361H652Z" fill="#8a8a8a" />
      <path d="M653 348V360M660 348V360M667 348V360M674 348V360M681 348V360M672 587V606M679 587V606M686 587V606" stroke="#222" strokeWidth="3" />
      <path d="M720 345L728 352L722 395L710 400ZM695 590Q708 590 705 608L692 614ZM700 540L712 548L706 585L698 570Z" fill="#777" stroke="#333" strokeWidth="2" />
    </g>
  );
}

function ExplodedView() {
  return (
    <svg
      width="496"
      height="550"
      viewBox="513 150 496 550"
      role="img"
      aria-label="Exploded view of the limited slip differential"
    >
      <Defs />
      <Gearbox />
      <rect x="545" y="190" width="42" height="126" fill="url(#fade)" />
      <BellHousing />
      <OutputParts />
      <CoverParts />
      <DifferentialParts />
      <path d={leaders} fill="none" stroke="#555" strokeWidth="1" />
      <g fill="none" stroke="#2b2b2b" strokeWidth="1.500">
        <path d="M641 328L607 339M592 344L570 351V370M901 490L937 478M971 448V467L952 474" />
        <path d="M570 378V413H971V446" strokeDasharray="26 5 2 5" />
      </g>
      <g fontFamily="Liberation Sans, Arial, sans-serif" fontWeight="700" fontSize="16" fill="#303030" textAnchor="middle">
        {callouts.map(([n, x, y]) => (
          <text key={n} x={x} y={y}>
            {n}
          </text>
        ))}
      </g>
    </svg>
  );
}

/* ---------- data ---------- */

const bookmarks = [
  { level: 0, text: "Transmission (Manual)", open: true },
  { level: 1, text: "Table of contents" },
  { level: 1, text: "General data", open: false },
  { level: 1, text: "Clutch, controls", open: false },
  { level: 1, text: "Manual transmission,\ncontrols, case", open: true },
  { level: 2, text: "Dismantling and\nassembling the\ngearbox", selected: true },
  { level: 2, text: "Dismantling and\nassembling manual\ntranmission\n(modifications from\n1991 model on)" },
  { level: 2, text: "Dismantling and\nassembling interaxle\nlock with Valeo inner\ndiscs" },
  { level: 2, text: "Removing and\ninstalling the sealing\nring for the drive\nshaft" },
  { level: 2, text: "Dismantling and\nassembling the\nclamp plate" },
  { level: 2, text: "Dismantling and\nassembling the\ndistributor housing" },
  { level: 2, text: "Dismantling and\nassembling the\ntransfer box housing\n(from 1991 model\non)" },
  { level: 2, text: "Dismantling and\nassembling the\nintermediate\nhousing" },
  { level: 2, text: "" },
];

export default function App() {
  return (
    <Window>
      <GlobalStyle />
      <TabStrip>
        <TabGap $width="89px" />
        <ActiveTab />
        <TabGap />
      </TabStrip>
      <Toolbar>
        <ToolGroup $gap={15}>
          <IconButton aria-label="Upload"><CloudIcon /></IconButton>
          <IconButton aria-label="Print"><PrintIcon /></IconButton>
          <IconButton aria-label="Send by email"><MailIcon /></IconButton>
          <IconButton aria-label="Search"><SearchIcon /></IconButton>
        </ToolGroup>
        <ToolGroup $gap={16}>
          <IconButton aria-label="Previous page">
            <CircleIcon d="M11 16V6.500M7 10.300L11 6.300L15 10.300" />
          </IconButton>
          <IconButton aria-label="Next page">
            <CircleIcon d="M11 6V15.500M7 11.700L11 15.700L15 11.700" />
          </IconButton>
          <PageField>
            <PageInput aria-label="Page" defaultValue="90" />
            {"/ 229"}
          </PageField>
          <Divider />
          <IconButton aria-label="Select" $color="#1f6fb5"><CursorIcon /></IconButton>
          <IconButton aria-label="Hand"><HandIcon /></IconButton>
          <IconButton aria-label="Zoom out"><CircleIcon d="M7 11H15" /></IconButton>
          <IconButton aria-label="Zoom in"><CircleIcon d="M7 11H15M11 7V15" /></IconButton>
          <ZoomField>
            <ZoomSelect aria-label="Zoom level" defaultValue="75.5%">
              <option>75.5%</option>
            </ZoomSelect>
            <Caret />
          </ZoomField>
          <IconButton aria-label="Fit page" $width={27} $color="#1f6fb5">
            <FitIcon />
            <Caret />
          </IconButton>
          <IconButton aria-label="Page display"><RulerIcon /></IconButton>
          <Divider />
          <IconButton aria-label="Comment" $color="#a5a5a5"><CommentIcon /></IconButton>
        </ToolGroup>
      </Toolbar>
      <Body>
        <Sidebar>
          <PanelRow $spread $height={33}>
            <PanelTitle>しおり</PanelTitle>
            <IconButton aria-label="Close panel" $width={18}><CloseIcon /></IconButton>
          </PanelRow>
          <PanelRow $height={37}>
            <IconButton aria-label="Options" $width={28}>
              <PanelOptionsIcon />
              <Caret />
            </IconButton>
            <Divider />
            <IconButton aria-label="Find current bookmark"><FindBookmarkIcon /></IconButton>
          </PanelRow>
          <ListFrame>
            <Tree>
              {bookmarks.map((b, i) => (
                <TreeRow key={i} $level={b.level}>
                  {b.open === undefined ? (
                    <Blank />
                  ) : (
                    <Toggle aria-label={b.open ? "Collapse" : "Expand"}>
                      <Chevron open={b.open} />
                    </Toggle>
                  )}
                  <BookmarkIcon />
                  <BookmarkLink href="#" $selected={b.selected}>{b.text}</BookmarkLink>
                </TreeRow>
              ))}
            </Tree>
            <ScrollBar>
              <ScrollButton aria-label="Scroll up">
                <Svg w={8} h={6}><path d="M1 5L4 2L7 5" /></Svg>
              </ScrollButton>
              <ScrollTrack><ScrollThumb /></ScrollTrack>
              <ScrollButton aria-label="Scroll down">
                <Svg w={8} h={6}><path d="M1 1L4 4L7 1" /></Svg>
              </ScrollButton>
            </ScrollBar>
          </ListFrame>
        </Sidebar>
        <Rail aria-label="Hide panel">
          <svg width="5" height="8" viewBox="0 0 5 8" aria-hidden="true">
            <path d="M5 0V8L0 4Z" fill="currentColor" />
          </svg>
        </Rail>
        <Viewer>
          <Sheet>
            <SheetLinks>
              <SheetLink href="#">Carrera 4 Table Of Contents</SheetLink>
              <SheetLink href="#">Carrera 2 Addendum</SheetLink>
              <SheetLink href="#">Main Menu</SheetLink>
            </SheetLinks>
            <SheetHeader>
              <Chapter>39</Chapter>
              <span>Differential, Transaxle System</span>
              <RightText>911 Carrera 4</RightText>
            </SheetHeader>
            <SheetTitle>Removing and installing limited slip differential</SheetTitle>
            <Figure><ExplodedView /></Figure>
            <SheetFooter>
              <span>39 - 2</span>
              <RightText>
                Removing and installing limited slip differential
                <Imprint>Printed in Germany – X, 1990</Imprint>
              </RightText>
            </SheetFooter>
          </Sheet>
        </Viewer>
      </Body>
    </Window>
  );
}
